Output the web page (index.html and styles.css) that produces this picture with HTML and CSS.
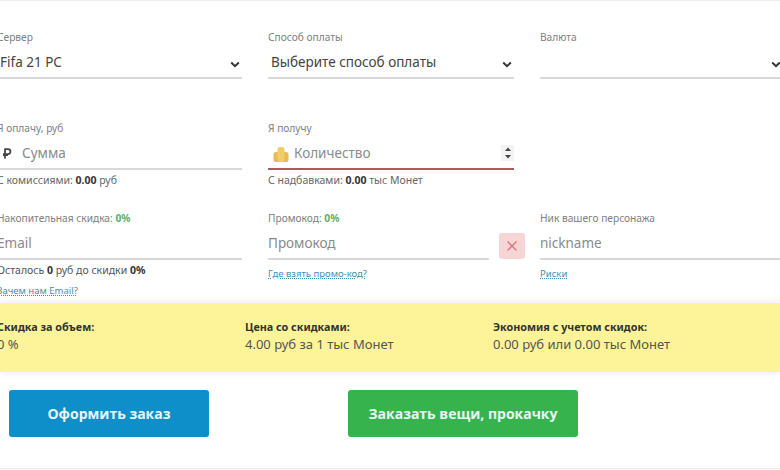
FILE: index.html
```html
<!DOCTYPE html>
<html lang="ru">
<head>
<meta charset="utf-8">
<title>Заказ</title>
<link rel="stylesheet" href="styles.css">
</head>
<body>
<main class="page">
  <form class="form">
    <div class="grid row-select">
      <div class="field">
        <div class="label">Сервер</div>
        <div class="control"><span class="value">Fifa 21 PC</span><svg class="chev" viewBox="0 0 10 7"><path d="M1.2 1.5 5 5.2 8.8 1.5"/></svg></div>
      </div>
      <div class="field">
        <div class="label">Способ оплаты</div>
        <div class="control"><span class="value">Выберите способ оплаты</span><svg class="chev" viewBox="0 0 10 7"><path d="M1.2 1.5 5 5.2 8.8 1.5"/></svg></div>
      </div>
      <div class="field">
        <div class="label">Валюта</div>
        <div class="control"><span class="value"></span><svg class="chev chev-last" viewBox="0 0 10 7"><path d="M1.2 1.5 5 5.2 8.8 1.5"/></svg></div>
      </div>
    </div>

    <div class="grid row-amount">
      <div class="field">
        <div class="label">Я оплачу, руб</div>
        <div class="control"><svg class="rub" viewBox="0 0 10 12"><path d="M3 1v10M1 7.6h5M3 1.6h3a2.4 2.4 0 0 1 0 5H1"/></svg><span class="placeholder">Сумма</span></div>
        <div class="hint">С комиссиями: <b>0.00</b> руб</div>
      </div>
      <div class="field">
        <div class="label">Я получу</div>
        <div class="control control-error">
          <svg class="coins" viewBox="0 0 16 16"><rect x="0.5" y="6" width="6.5" height="10" rx="2.5"/><rect x="9" y="6" width="6.5" height="10" rx="2.5"/><rect x="4.5" y="1" width="7" height="15" rx="3" class="coin-top"/></svg>
          <span class="placeholder">Количество</span>
          <span class="spin"><svg viewBox="0 0 8 14"><path d="M4 1.5 7 5H1zM4 12.5 1 9h6z"/></svg></span>
        </div>
        <div class="hint">С надбавками: <b>0.00</b> тыс Монет</div>
      </div>
    </div>

    <div class="grid row-extra">
      <div class="field">
        <div class="label">Накопительная скидка: <b class="green">0%</b></div>
        <div class="control"><span class="placeholder">Email</span></div>
        <div class="hint hint-dark">Осталось <b>0</b> руб до скидки <b>0%</b></div>
        <a class="link link-second" href="#">Зачем нам Email?</a>
      </div>
      <div class="field">
        <div class="label">Промокод: <b class="green">0%</b></div>
        <div class="promo">
          <div class="control promo-input"><span class="placeholder">Промокод</span></div>
          <span class="clear"><svg viewBox="0 0 12 12"><path d="M1.5 1.5l9 9M10.5 1.5l-9 9"/></svg></span>
        </div>
        <a class="link" href="#">Где взять промо-код?</a>
      </div>
      <div class="field">
        <div class="label">Ник вашего персонажа</div>
        <div class="control"><span class="placeholder">nickname</span></div>
        <a class="link" href="#">Риски</a>
      </div>
    </div>
  </form>

  <section class="summary">
    <div class="sum-item"><div class="sum-title">Скидка за объем:</div><div class="sum-value">0 %</div></div>
    <div class="sum-item"><div class="sum-title">Цена со скидками:</div><div class="sum-value">4.00 руб за 1 тыс Монет</div></div>
    <div class="sum-item"><div class="sum-title">Экономия с учетом скидок:</div><div class="sum-value">0.00 руб или 0.00 тыс Монет</div></div>
  </section>

  <div class="actions">
    <button type="button" class="btn btn-blue">Оформить заказ</button>
    <button type="button" class="btn btn-green">Заказать вещи, прокачку</button>
  </div>
</main>
</body>
</html>
```
FILE: styles.css
```css
* { box-sizing: border-box; }
html, body { margin: 0; height: 100%; overflow: hidden; background: #fff; }
body { font-family: "Noto Sans", "Open Sans", sans-serif; color: #3f3f3f; }
.page {
  width: 780px;
  height: 469px;
  border-top: 1px solid #ececec;
  border-bottom: 1px solid #ececec;
  overflow: hidden;
  padding-top: 29px;
}
.form { margin-left: -3px; width: 790px; }
.grid { display: grid; grid-template-columns: 245px 246px 246px; column-gap: 26px; }
.row-amount { margin-top: 42px; }
.row-extra { margin-top: 24px; }
.field { min-width: 0; }
.label { font-size: 10.2px; line-height: 14px; color: #808080; height: 14px; }
.green { color: #5cb06a; font-weight: 700; }
.control {
  display: flex;
  align-items: center;
  height: 35px;
  padding-top: 3px;
  padding-bottom: 0;
  border-bottom: 2px solid #d9d9d9;
  position: relative;
}
.value { font-size: 13.5px; color: #444; padding-left: 3px; white-space: nowrap; }
.chev { position: absolute; right: 2px; top: 17px; width: 10px; height: 7px; fill: none; stroke: #333; stroke-width: 2; }
.chev-last { right: 5px; }
.placeholder { font-size: 13.5px; color: #8a8a8a; white-space: nowrap; }
.rub { width: 10px; height: 13px; margin: 1px 10px 0 5px; fill: none; stroke: #444; stroke-width: 1.8; flex: none; }
.coins { width: 16px; height: 16px; margin: 2px 5px 0 5px; fill: #e9bb52; flex: none; }
.coin-top { fill: #f2cb6c; }
.control-error { border-bottom-color: #b0575b; }
.spin { position: absolute; right: 0; top: 10px; width: 13px; height: 16px; background: #f3f3f3; display: flex; align-items: center; justify-content: center; }
.spin svg { width: 8px; height: 14px; fill: #444; }
.hint { font-size: 10.5px; line-height: 14px; margin-top: 3px; color: #666; white-space: nowrap; }
.hint b { color: #333; }
.hint-dark { color: #555; }
.link { display: inline-block; font-size: 9.5px; line-height: 12px; margin-top: 4px; color: #3f8fb0; text-decoration: underline dotted; text-underline-offset: 1px; white-space: nowrap; }
.link-second { display: block; margin-top: 8px; }
.promo { display: flex; gap: 10px; }
.promo-input { width: 221px; flex: none; }
.clear { width: 26px; height: 26px; background: #f7d5d6; border-radius: 3px; display: flex; align-items: center; justify-content: center; flex: none; margin-top: 8px; }
.clear svg { width: 12px; height: 12px; fill: none; stroke: #d77476; stroke-width: 1.3; }
.summary {
  margin-top: 6px;
  height: 69px;
  background: #fdf398;
  box-shadow: 0 0 8px rgba(0, 0, 0, .1);
  display: grid;
  grid-template-columns: 245px 248px 1fr;
  padding-top: 16px;
}
.sum-item { white-space: nowrap; }
.sum-title { font-size: 10.8px; line-height: 15px; font-weight: 700; color: #333; }
.sum-value { font-size: 13px; line-height: 19px; margin-top: 1px; color: #555; }
.summary .sum-item:first-child { margin-left: -3px; }
.actions { display: flex; margin-top: 18px; padding-left: 9px; gap: 139px; }
.btn { height: 47px; border: 0; border-radius: 3px; color: #e9f6f8; font-family: "Open Sans", "Noto Sans", sans-serif; font-weight: 700; font-size: 14px; }
.btn-blue { width: 200px; background: #0e8fca; }
.btn-green { width: 230px; background: #37b34d; }
```
